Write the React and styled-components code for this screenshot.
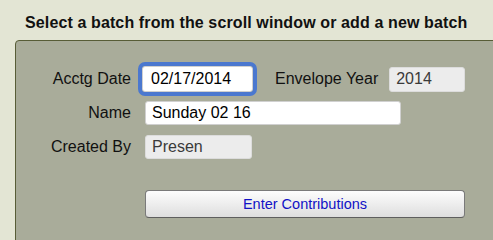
import React from "react";
import styled, { createGlobalStyle } from "styled-components";

const Global = createGlobalStyle`
  html, body { margin: 0; padding: 0; background: #e3e5d4; overflow: hidden; }
  body { font-family: "Liberation Sans", Arial, sans-serif; }
`;

const Page = styled.div`
  width: 100vw;
  height: 100vh;
  overflow: hidden;
  display: flex;
  flex-direction: column;
  background: #e3e5d4;
`;

const Title = styled.h1`
  margin: 0;
  padding: 14px 0 0 25px;
  font-size: 16px;
  line-height: 18px;
  letter-spacing: 0.12px;
  font-weight: bold;
  color: #111;
`;

const Panel = styled.div`
  flex: 1;
  margin: 8px -20px -20px 15px;
  background: #a9ac9a;
  border: 1px solid #585d37;
  border-radius: 4px 0 0 0;
  padding: 21px 0 0 0;
  display: flex;
  flex-direction: column;
`;

const Row = styled.div`
  display: flex;
  align-items: center;
  height: 34px;
`;

const Label = styled.label`
  width: ${(p) => p.$width || "115px"};
  text-align: ${(p) => p.$align || "right"};
  margin-left: ${(p) => p.$ml || "0"};
  margin-right: ${(p) => p.$mr || "14px"};
  font-size: 16px;
  color: #111;
  white-space: nowrap;
`;

const Field = styled.input`
  box-sizing: border-box;
  width: ${(p) => p.$w}px;
  height: ${(p) => p.$h || 24}px;
  margin-left: ${(p) => p.$ml || 0}px;
  padding: 0 0 0 ${(p) => p.$pl || 6}px;
  font-family: "Liberation Sans", Arial, sans-serif;
  font-size: 16px;
  color: ${(p) => (p.disabled ? "#3a3a3a" : "#000")};
  background: ${(p) => (p.disabled ? "#ececec" : "#fff")};
  border: 1px solid ${(p) => (p.disabled ? "#dcdcdc" : "#d0d0d0")};
  border-radius: 3px;
  outline: ${(p) => (p.$focused ? "4px solid #4b78cf" : "none")};
  outline-offset: 0;
`;

const ButtonRow = styled.div`
  display: flex;
  margin-top: 26px;
  padding-left: 129px;
`;

const Button = styled.button`
  box-sizing: border-box;
  width: 320px;
  height: 28px;
  font-family: "Liberation Sans", Arial, sans-serif;
  font-size: 14.5px;
  color: #1212c6;
  background: linear-gradient(#fdfdfd, #dedede);
  border: 1px solid #7a7a7a;
  border-bottom-color: #5e5e5e;
  border-radius: 4px;
  padding: 0;
`;

export default function App() {
  return (
    <Page>
      <Global />
      <Title>Select a batch from the scroll window or add a new batch</Title>
      <Panel>
        <Row>
          <Label $mr="11px">Acctg Date</Label>
          <Field $w={111} $h={26} $pl={8} $focused defaultValue="02/17/2014" />
          <Label $width="auto" $align="left" $ml="22px" $mr="11px">
            Envelope Year
          </Label>
          <Field $w={76} $h={25} disabled defaultValue="2014" />
        </Row>
        <Row>
          <Label>Name</Label>
          <Field $w={256} $h={24} defaultValue="Sunday 02 16" />
        </Row>
        <Row>
          <Label>Created By</Label>
          <Field $w={107} $h={24} disabled defaultValue="Presen" />
        </Row>
        <ButtonRow>
          <Button>Enter Contributions</Button>
        </ButtonRow>
      </Panel>
    </Page>
  );
}
